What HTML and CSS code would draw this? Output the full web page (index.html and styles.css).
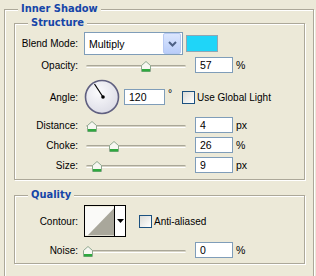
FILE: index.html
```html
<!DOCTYPE html>
<html>
<head>
    <title>Inner Shadow</title>
    <link rel="stylesheet" href="styles.css">
</head>
<body>
    <fieldset class="group outer">
        <legend>Inner Shadow</legend>

        <fieldset class="group section structure">
            <legend>Structure</legend>

            <div class="row row-blend">
                <span class="label">Blend Mode:</span>
                <div class="select">
                    <span class="select-text">Multiply</span>
                    <span class="select-btn">
                        <svg width="9" height="6" viewBox="0 0 9 6"><path d="M1 1 L4.5 4.5 L8 1" fill="none" stroke="#4d6185" stroke-width="2"/></svg>
                    </span>
                </div>
                <span class="swatch"></span>
            </div>

            <div class="row row-slider row-opacity">
                <span class="label">Opacity:</span>
                <div class="slider">
                    <span class="thumb" style="left: 57px"><svg width="10" height="11" viewBox="0 0 10 11"><path d="M5 0.5 L9.5 4.5 L9.5 10.5 L0.5 10.5 L0.5 4.5 Z" fill="#f7f7f2" stroke="#8fa88f"/><rect x="1" y="8" width="8" height="2.5" fill="#2fa83f"/></svg></span>
                </div>
                <span class="num">57</span>
                <span class="unit">%</span>
            </div>

            <div class="row row-angle">
                <span class="label">Angle:</span>
                <svg class="dial" width="36" height="36" viewBox="0 0 36 36">
                    <defs>
                        <radialGradient id="dialFill" cx="0.4" cy="0.35" r="0.7">
                            <stop offset="0" stop-color="#fbfbfd"/>
                            <stop offset="1" stop-color="#dcdce6"/>
                        </radialGradient>
                    </defs>
                    <circle cx="18" cy="18" r="16.5" fill="url(#dialFill)" stroke="#606080" stroke-width="1.6"/>
                    <line x1="19" y1="18" x2="10.5" y2="5" stroke="#000" stroke-width="1.2"/>
                    <circle cx="19" cy="18" r="1.8" fill="#000"/>
                </svg>
                <span class="num num-angle">120</span>
                <span class="unit unit-deg">°</span>
                <span class="check"></span>
                <span class="check-label">Use Global Light</span>
            </div>

            <div class="row row-slider row-distance">
                <span class="label">Distance:</span>
                <div class="slider">
                    <span class="thumb" style="left: 3px"><svg width="10" height="11" viewBox="0 0 10 11"><path d="M5 0.5 L9.5 4.5 L9.5 10.5 L0.5 10.5 L0.5 4.5 Z" fill="#f7f7f2" stroke="#8fa88f"/><rect x="1" y="8" width="8" height="2.5" fill="#2fa83f"/></svg></span>
                </div>
                <span class="num">4</span>
                <span class="unit">px</span>
            </div>

            <div class="row row-slider row-choke">
                <span class="label">Choke:</span>
                <div class="slider">
                    <span class="thumb" style="left: 25px"><svg width="10" height="11" viewBox="0 0 10 11"><path d="M5 0.5 L9.5 4.5 L9.5 10.5 L0.5 10.5 L0.5 4.5 Z" fill="#f7f7f2" stroke="#8fa88f"/><rect x="1" y="8" width="8" height="2.5" fill="#2fa83f"/></svg></span>
                </div>
                <span class="num">26</span>
                <span class="unit">%</span>
            </div>

            <div class="row row-slider row-size">
                <span class="label">Size:</span>
                <div class="slider">
                    <span class="thumb" style="left: 8px"><svg width="10" height="11" viewBox="0 0 10 11"><path d="M5 0.5 L9.5 4.5 L9.5 10.5 L0.5 10.5 L0.5 4.5 Z" fill="#f7f7f2" stroke="#8fa88f"/><rect x="1" y="8" width="8" height="2.5" fill="#2fa83f"/></svg></span>
                </div>
                <span class="num">9</span>
                <span class="unit">px</span>
            </div>
        </fieldset>

        <fieldset class="group section quality">
            <legend>Quality</legend>

            <div class="row row-contour">
                <span class="label">Contour:</span>
                <div class="contour">
                    <svg width="31" height="30" viewBox="0 0 31 30">
                        <rect width="31" height="30" fill="#fafaf8"/>
                        <path d="M3 30 L31 1 L31 30 Z" fill="#a9a79b"/>
                    </svg>
                    <span class="contour-btn">
                        <svg width="7" height="4" viewBox="0 0 7 4"><path d="M0 0 H7 L3.5 4 Z" fill="#000"/></svg>
                    </span>
                </div>
                <span class="check"></span>
                <span class="check-label">Anti-aliased</span>
            </div>

            <div class="row row-slider row-noise">
                <span class="label">Noise:</span>
                <div class="slider">
                    <span class="thumb" style="left: -1px"><svg width="10" height="11" viewBox="0 0 10 11"><path d="M5 0.5 L9.5 4.5 L9.5 10.5 L0.5 10.5 L0.5 4.5 Z" fill="#f7f7f2" stroke="#8fa88f"/><rect x="1" y="8" width="8" height="2.5" fill="#2fa83f"/></svg></span>
                </div>
                <span class="num">0</span>
                <span class="unit">%</span>
            </div>
        </fieldset>
    </fieldset>
</body>
</html>
```

FILE: styles.css
```css
body {
    margin: 0;
    width: 316px;
    height: 276px;
    overflow: hidden;
    background: #ece9d8;
    font-family: "Liberation Sans", Arial, sans-serif;
    font-size: 10px;
    color: #000;
}

.group {
    margin: 0;
    min-width: 0;
    border: 1px solid #aca899;
    box-shadow: inset 1px 1px 0 #fff, 1px 1px 0 #fff;
}

.group legend {
    padding: 0 3px;
    font-family: "DejaVu Sans Condensed", "Liberation Sans", Arial, sans-serif;
    font-size: 11px;
    font-weight: bold;
    line-height: 14px;
    color: #1545a8;
    background: #ece9d8;
}

.outer {
    margin: 2px 2px 0 4px;
    padding: 0 8px 20px 9px;
}

.outer > legend {
    margin-left: 4px;
}

.section {
    padding: 0 6px 6px 0;
}

.section > legend {
    margin-left: 13px;
}

.quality {
    margin-top: 8px;
    padding-bottom: 5px;
}

.row {
    display: flex;
    align-items: center;
}

.label {
    flex: none;
    width: 63px;
    margin-right: 6px;
    text-align: right;
}

/* row spacing */
.row-blend { height: 23px; margin-top: 2px; }
.row-slider { height: 16px; }
.row-opacity { margin-top: 2px; }
.row-angle { height: 36px; margin-top: 6px; }
.row-distance { margin-top: 2px; }
.row-choke { margin-top: 4px; }
.row-size { margin-top: 4px; }
.row-contour { height: 32px; margin-top: 3px; }
.row-noise { margin-top: 5px; }

.select {
    display: flex;
    align-items: center;
    box-sizing: border-box;
    width: 99px;
    height: 23px;
    padding: 1px;
    border: 1px solid #7f9db9;
    background: #fff;
}

.select-text {
    flex: 1;
    padding-left: 3px;
    font-size: 10.5px;
}

.select-btn {
    display: flex;
    align-items: center;
    justify-content: center;
    width: 16px;
    height: 19px;
    border: 1px solid #b7c9f3;
    border-radius: 2px;
    background: linear-gradient(#dbe6fe, #b9cdf9);
}

.swatch {
    width: 30px;
    height: 15px;
    margin-left: 3px;
    border: 1px solid #8fa6b4;
    background: #1fd5f8;
}

.slider {
    position: relative;
    flex: none;
    width: 102px;
    height: 16px;
    margin-right: 9px;
}

.slider::before {
    content: "";
    position: absolute;
    left: 2px;
    right: 0;
    top: 8px;
    height: 1px;
    border-top: 1px solid #aaa798;
    border-bottom: 1px solid #fff;
    border-radius: 2px;
    background: #d6d3c5;
}

.thumb {
    position: absolute;
    top: 4px;
    line-height: 0;
}

.num {
    box-sizing: border-box;
    width: 38px;
    height: 16px;
    padding: 0 4px;
    border: 1px solid #7f9db9;
    background: #fff;
    font-size: 10.5px;
    line-height: 14px;
}

.unit {
    margin-left: 3px;
    font-size: 10.5px;
}

.dial {
    flex: none;
}

.num-angle {
    width: 41px;
    margin-left: 4px;
}

.unit-deg {
    align-self: flex-start;
    margin-top: 8px;
    width: 11px;
}

.check {
    box-sizing: border-box;
    width: 13px;
    height: 13px;
    border: 1px solid #1c5180;
    background: linear-gradient(135deg, #dcdcd7, #fff);
}

.row-angle .check {
    margin-left: 3px;
}

.check-label {
    margin-left: 2px;
}

.contour {
    display: flex;
    width: 42px;
    height: 32px;
    box-sizing: border-box;
    border: 1px solid #000;
}

.contour svg {
    display: block;
}

.contour-btn {
    display: flex;
    justify-content: center;
    align-items: center;
    width: 10px;
    border-left: 1px solid #000;
    background: #fff;
}

.row-contour .check {
    margin-left: 13px;
}
```
